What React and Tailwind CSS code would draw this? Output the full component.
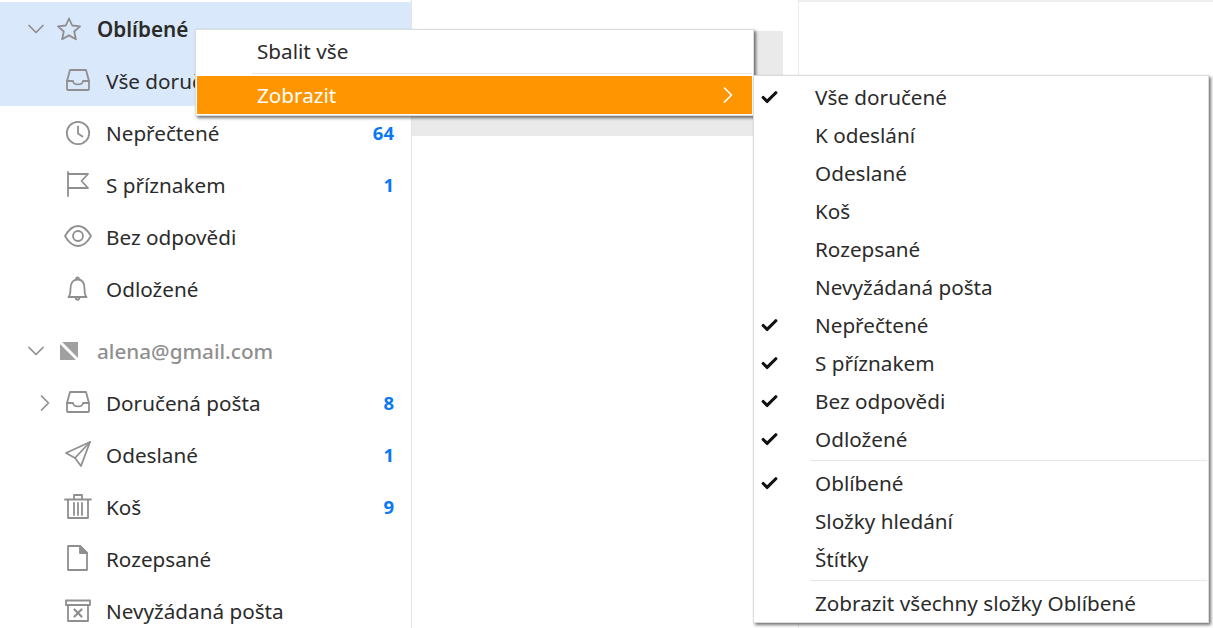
import { Check, ChevronDown, ChevronRight } from "lucide-react";

function Icon({ children, strokeWidth = 1.800 }) {
  return (
    <svg width="24" height="24" viewBox="0 0 24 24" fill="none" stroke="#8f8f8f" strokeWidth={strokeWidth} strokeLinejoin="round" strokeLinecap="round" className="shrink-0 overflow-visible">
      {children}
    </svg>
  );
}

const InboxIcon = () => (
  <Icon>
    <path d="M1 12 4 1h16l3 11" />
    <path d="M1 12h6c.3 2.600 2 3.400 5 3.400s4.700-.8 5-3.400h6v8a1 1 0 0 1-1 1H2a1 1 0 0 1-1-1z" />
  </Icon>
);
const ClockIcon = () => (
  <Icon>
    <circle cx="12" cy="12" r="11.200" />
    <path d="M12 5.500V12.500l4.500 3" />
  </Icon>
);
const FlagIcon = () => (
  <Icon>
    <path d="M2 -1v24" />
    <path d="M2 1h20l-6.500 7 6.500 7H2" />
  </Icon>
);
const EyeIcon = () => (
  <Icon>
    <path d="M-1 11C3 4 7.500 1 12 1s9 3 13 10c-4 7-8.500 10-13 10S3 18-1 11z" />
    <circle cx="12" cy="11" r="5" />
  </Icon>
);
const BellIcon = () => (
  <Icon>
    <path d="M2.500 20c1.500-1.500 2-3 2-8.500 0-6 3-9 7-9s7 3 7 9c0 5.500.5 7 2 8.500z" />
    <path d="M10 2c.2-2 2.800-2 3 0M9.500 20.500c.5 3 3.500 3 4 0" />
  </Icon>
);
const SendIcon = () => (
  <Icon>
    <path d="M24-1 0 10l9 5 6 8z" />
    <path d="M24-1 9 15" />
  </Icon>
);
const TrashIcon = () => (
  <Icon>
    <path d="M-1 4.500h26M8 4V0h8v4M2 5v18h20V5" />
    <path d="M8 8v12M12 8v12M16 8v12" />
  </Icon>
);
const FileIcon = () => (
  <Icon>
    <path d="M2-1h12l7 7v17H2z" />
    <path d="M14-1v7h7z" fill="#8f8f8f" />
  </Icon>
);
const JunkIcon = () => (
  <Icon>
    <path d="M0 1.500h24V6H0zM2 6v16h20V6" />
    <path d="M8.500 10.500l7 7M15.500 10.500l-7 7" strokeWidth="2.200" />
  </Icon>
);

function FolderRow({ icon, label, count, expand }) {
  return (
    <div className="relative flex items-center h-[52px] pl-[66px] pr-[17px]">
      {expand && <ChevronRight size={28} strokeWidth={1.500} color="#8f8f8f" className="absolute left-[31px]" />}
      {icon}
      <span className="ml-[16px] pt-[2px] text-[#2b2b2b]">{label}</span>
      {count && <span className="ml-auto text-[18.500px] font-bold text-[#0a78f5]">{count}</span>}
    </div>
  );
}

function SubItem({ label, checked }) {
  return (
    <div className="flex items-center h-[38px] text-[#2b2b2b]">
      <div className="w-[61px] pl-[6px]">
        {checked && <Check size={19} strokeWidth={4} color="#111" />}
      </div>
      <span className="pt-[2px]">{label}</span>
    </div>
  );
}

export default function App() {
  return (
    <div className="relative flex w-[1213px] h-[628px] overflow-hidden bg-white font-['Noto_Sans',sans-serif] text-[20.700px]">
      <aside className="w-[412px] shrink-0 border-r border-[#e4e4e4] pt-[2px]">
        <div className="h-[104px] mb-[1px] pt-[1px] bg-[#d9e8fa]">
          <div className="flex items-center h-[52px] pl-[22px]">
            <ChevronDown size={28} strokeWidth={1.500} color="#8f8f8f" />
            <div className="ml-[7px]">
              <svg width="24" height="24" viewBox="0 0 24 24" fill="none" stroke="#8f8f8f" strokeWidth="1.800" strokeLinejoin="round">
                <path d="M12 1.500l3.200 7 7.800.8-5.800 5.200 1.700 7.800L12 18.400l-6.900 3.900 1.700-7.800L1 9.300l7.800-.8z" />
              </svg>
            </div>
            <span className="ml-[16px] pt-[2px] font-semibold text-[#2b2b2b]">Oblíbené</span>
          </div>
          <FolderRow icon={<InboxIcon />} label="Vše doručené" />
        </div>
        <FolderRow icon={<ClockIcon />} label="Nepřečtené" count="64" />
        <FolderRow icon={<FlagIcon />} label="S příznakem" count="1" />
        <FolderRow icon={<EyeIcon />} label="Bez odpovědi" />
        <FolderRow icon={<BellIcon />} label="Odložené" />
        <div className="flex items-center h-[52px] mt-[10px] pl-[22px]">
          <ChevronDown size={28} strokeWidth={1.500} color="#8f8f8f" />
          <svg width="18" height="18" viewBox="0 0 18 18" className="ml-[10px]">
            <path d="M0 0h18v18H0z" fill="#a0a0a0" />
            <path d="M0 0 18 18" stroke="#fff" strokeWidth="3" />
          </svg>
          <span className="ml-[19px] pt-[2px] font-medium text-[#8f8f8f]">alena@gmail.com</span>
        </div>
        <FolderRow icon={<InboxIcon />} label="Doručená pošta" count="8" expand />
        <FolderRow icon={<SendIcon />} label="Odeslané" count="1" />
        <FolderRow icon={<TrashIcon />} label="Koš" count="9" />
        <FolderRow icon={<FileIcon />} label="Rozepsané" />
        <FolderRow icon={<JunkIcon />} label="Nevyžádaná pošta" />
      </aside>

      <div className="w-[386px] shrink-0 pt-[31px]">
        <div className="w-[371px] h-[105px] bg-[#eaeaea]" />
      </div>

      <div className="flex-1 border-l border-[#ececec]">
        <div className="h-[2px] bg-[#eeeeee]" />
      </div>

      {/* context menu */}
      <div className="absolute left-[195px] top-[29px] w-[559px] h-[87px] bg-white border border-[#dcdcdc] p-px shadow-[2px_2px_3px_rgba(0,0,0,0.55)]">
        <div className="flex items-center h-[42px] pl-[60px] text-[#2b2b2b]">Sbalit vše</div>
        <div className="ml-[55px] h-px bg-[#e6e6e6]" />
        <div className="mt-[2px] flex items-center justify-between h-[38px] pl-[60px] pr-[10px] bg-[#ff9500] text-white">
          <span className="pt-[2px]">Zobrazit</span>
          <ChevronRight size={28} strokeWidth={1.500} />
        </div>
      </div>

      {/* submenu */}
      <div className="absolute left-[753px] top-[75px] w-[456px] bg-white border border-[#dcdcdc] pt-[2px] shadow-[2px_2px_3px_rgba(0,0,0,0.55)]">
        <SubItem label="Vše doručené" checked />
        <SubItem label="K odeslání" />
        <SubItem label="Odeslané" />
        <SubItem label="Koš" />
        <SubItem label="Rozepsané" />
        <SubItem label="Nevyžádaná pošta" />
        <SubItem label="Nepřečtené" checked />
        <SubItem label="S příznakem" checked />
        <SubItem label="Bez odpovědi" checked />
        <SubItem label="Odložené" checked />
        <div className="ml-[56px] mr-px mt-[2px] mb-[3px] h-px bg-[#e6e6e6]" />
        <SubItem label="Oblíbené" checked />
        <SubItem label="Složky hledání" />
        <SubItem label="Štítky" />
        <div className="ml-[56px] mr-px mt-[2px] mb-[3px] h-px bg-[#e6e6e6]" />
        <SubItem label="Zobrazit všechny složky Oblíbené" />
      </div>
    </div>
  );
}
